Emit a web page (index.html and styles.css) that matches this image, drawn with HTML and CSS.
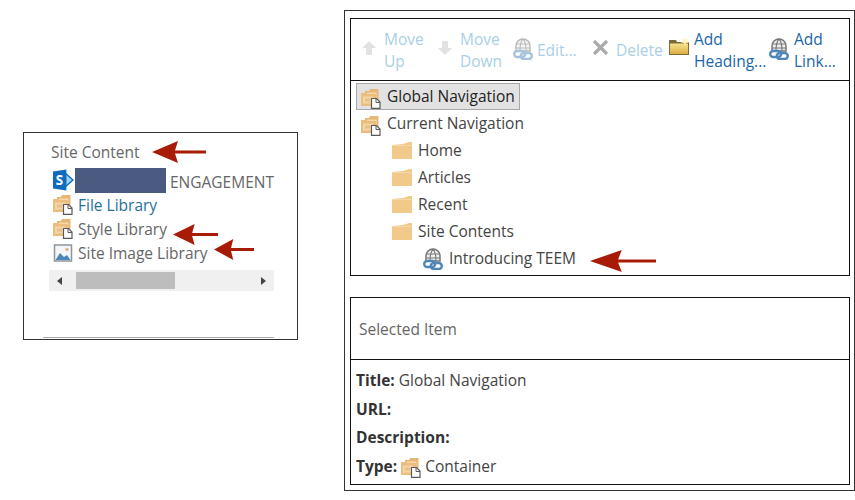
FILE: index.html
```html
<!DOCTYPE html>
<html lang="en">
<head>
<meta charset="utf-8">
<title>Navigation</title>
<link rel="stylesheet" href="styles.css">
</head>
<body>
<svg class="defs" width="0" height="0" aria-hidden="true">
  <defs>
    <linearGradient id="gold" x1="0" y1="0" x2="0" y2="1">
      <stop offset="0" stop-color="#f8e28a"/>
      <stop offset="1" stop-color="#dcae45"/>
    </linearGradient>
    <symbol id="container" viewBox="0 0 20 20">
      <path d="M4 2h4l1-2h8.500v11H4z" fill="#e8b777"/>
      <path d="M6 3.500h9.500v6H6z" fill="#f5d9ab"/>
      <path d="M0 4h5l1 1h9v12H0z" fill="#ebbd7f"/>
      <path d="M2 7.500h10v7H2z" fill="#f4d6a6"/>
      <path d="M4 9.500h5v3H4z" fill="#e8c08a"/>
      <path d="M10.500 9.500h5l3.500 3.500v6.400h-8.500z" fill="#fff" stroke="#5a5a5a" stroke-width="1.200"/>
      <path d="M15 9.500v4h4" fill="none" stroke="#5a5a5a" stroke-width="1"/>
    </symbol>
    <symbol id="folder" viewBox="0 0 20 17">
      <path d="M0 3l11-1 6-2h3v17H0z" fill="#f0c98b"/>
      <path d="M0 3h20v1H0z" fill="#f5d9aa"/>
    </symbol>
    <symbol id="link" viewBox="0 0 20 22">
      <path d="M3 13V8a7 7 0 0 1 14 0v5z" fill="#eeeeee" stroke="#777" stroke-width="1.500"/>
      <path d="M10 1c-3 3-3 9-3 12M10 1c3 3 3 9 3 12M3 6h14M3 10h14" fill="none" stroke="#777" stroke-width="1.100"/>
      <rect x="1.200" y="13" width="11" height="6" rx="3" fill="none" stroke="#4f86ba" stroke-width="2.400"/>
      <rect x="7.800" y="15" width="11" height="6" rx="3" fill="none" stroke="#4f86ba" stroke-width="2.400"/>
    </symbol>
    <symbol id="arrow" viewBox="0 0 54 22" preserveAspectRatio="none">
      <path d="M0 11L26 0l-3 9.500h31v3H23L26 22z" fill="#a81c07"/>
    </symbol>
  </defs>
</svg>

<main class="page">
  <section class="site-panel">
    <div class="site-title">Site Content</div>
    <div class="site-row site-row-first">
      <svg class="ico-sp" viewBox="0 0 22 22">
        <path d="M13 4l8 7-8 7z" fill="#9fd3f2" stroke="#0f6cbd" stroke-width="1.500"/>
        <path d="M0 2l14-2v22L0 20z" fill="#0f6cbd"/>
        <text x="3" y="16.500" class="sp-letter">S</text>
      </svg>
      <span class="redaction"></span>
      <span class="engagement">ENGAGEMENT</span>
    </div>
    <div class="site-row">
      <svg class="ico-con"><use href="#container"/></svg>
      <span class="lib-link">File Library</span>
    </div>
    <div class="site-row">
      <svg class="ico-con"><use href="#container"/></svg>
      <span>Style Library</span>
    </div>
    <div class="site-row">
      <svg class="ico-con" viewBox="0 0 20 20">
        <path d="M1.500 2h17v16h-17z" fill="#f4f7fa" stroke="#8f959c" stroke-width="1.500"/>
        <circle cx="14" cy="6.500" r="1.800" fill="#e7b982"/>
        <path d="M2.500 17l4.500-7 4 4 3-2 3.500 5z" fill="#4d86b8"/>
      </svg>
      <span>Site Image Library</span>
    </div>
    <div class="hscroll">
      <span class="tri-left"></span>
      <span class="thumb"></span>
      <span class="tri-right"></span>
    </div>
    <div class="site-rule"></div>
    <svg class="mark mark-a"><use href="#arrow"/></svg>
    <svg class="mark mark-b"><use href="#arrow"/></svg>
    <svg class="mark mark-c"><use href="#arrow"/></svg>
  </section>

  <section class="nav-panel">
    <div class="box">
      <div class="toolbar">
        <div class="tool off tool-up">
          <svg class="ico-arrow" viewBox="0 0 14 14"><path d="M7 0l7 7H10v7H4V7H0z" fill="#e2e2e2"/></svg>
          <span class="tool-label">Move<br>Up</span>
        </div>
        <div class="tool off tool-down">
          <svg class="ico-arrow" viewBox="0 0 14 14"><path d="M7 14l7-7H10V0H4v7H0z" fill="#e2e2e2"/></svg>
          <span class="tool-label">Move<br>Down</span>
        </div>
        <div class="tool off tool-edit">
          <svg class="ico-link faded"><use href="#link"/></svg>
          <span class="tool-label">Edit...</span>
        </div>
        <div class="tool off tool-delete">
          <svg class="ico-x" viewBox="0 0 17 17"><path d="M2 2l13 13M15 2L2 15" stroke="#ababab" stroke-width="3.200"/></svg>
          <span class="tool-label">Delete</span>
        </div>
        <div class="tool tool-head">
          <svg class="ico-newfolder" viewBox="0 0 20 18">
            <path d="M0 3h7l1 2h12v13H0z" fill="#7d6a3c"/>
            <path d="M1 6.500h18V17H1z" fill="url(#gold)"/>
            <path d="M15.500 0l1 2.500L19 1.500l-1 2.500 2 1.500-3 .5-1 2.500-1-2.500-3-.5 2-1.500-1-2.500 2.500 1z" fill="#fff6b8"/>
          </svg>
          <span class="tool-label">Add<br>Heading...</span>
        </div>
        <div class="tool tool-add">
          <svg class="ico-link"><use href="#link"/></svg>
          <span class="tool-label">Add<br>Link...</span>
        </div>
      </div>
      <div class="tree">
        <div class="node node-selected"><svg class="ico-con"><use href="#container"/></svg><span>Global Navigation</span></div>
        <div class="node"><svg class="ico-con"><use href="#container"/></svg><span>Current Navigation</span></div>
        <div class="node level-1"><svg class="ico-folder"><use href="#folder"/></svg><span>Home</span></div>
        <div class="node level-1"><svg class="ico-folder"><use href="#folder"/></svg><span>Articles</span></div>
        <div class="node level-1"><svg class="ico-folder"><use href="#folder"/></svg><span>Recent</span></div>
        <div class="node level-1"><svg class="ico-folder"><use href="#folder"/></svg><span>Site Contents</span></div>
        <div class="node level-2"><svg class="ico-link"><use href="#link"/></svg><span>Introducing TEEM</span></div>
      </div>
      <svg class="mark mark-d"><use href="#arrow"/></svg>
    </div>

    <div class="box detail-box">
      <div class="detail-head">Selected Item</div>
      <div class="detail-body">
        <div class="detail-row"><b>Title:</b> Global Navigation</div>
        <div class="detail-row"><b>URL:</b></div>
        <div class="detail-row"><b>Description:</b></div>
        <div class="detail-row"><b>Type:</b> <svg class="ico-con"><use href="#container"/></svg> Container</div>
      </div>
    </div>
  </section>
</main>
</body>
</html>
```

FILE: styles.css
```css
* { box-sizing: border-box; }
html, body { margin: 0; padding: 0; background: #fff; }
body {
  width: 855px;
  height: 500px;
  overflow: hidden;
  font-family: "Open Sans", "Noto Sans", sans-serif;
  font-size: 15.500px;
  color: #555;
}
.defs { position: absolute; }
.page { display: flex; align-items: flex-start; padding: 10px 0 0 23px; gap: 46px; }

.site-panel {
  position: relative;
  width: 275px;
  height: 208px;
  margin-top: 122px;
  border: 1px solid #333;
  padding: 8px 23px 0 25px;
  display: flex;
  flex-direction: column;
}
.site-title { height: 26px; line-height: 22px; padding-left: 2px; color: #666; }
.site-row { display: flex; align-items: center; gap: 5px; height: 24px; padding-left: 4px; color: #666; white-space: nowrap; }
.site-row-first { height: 26px; }
.ico-sp { width: 21px; height: 22px; flex: none; margin-right: -4px; }
.sp-letter { font: bold 14px "Open Sans", sans-serif; fill: #fff; }
.redaction { width: 91px; height: 25px; background: #4a5a80; flex: none; }
.engagement { margin: 3px 0 0 -1px; }
.lib-link { color: #1f7199; }
.ico-con { width: 20px; height: 20px; flex: none; }
.hscroll {
  margin-top: 5px;
  height: 21px;
  width: 225px;
  background: #f0f0f0;
  display: flex;
  align-items: center;
  padding: 0 8px;
  flex: none;
}
.tri-left, .tri-right { width: 0; height: 0; border-top: 4.500px solid transparent; border-bottom: 4.500px solid transparent; flex: none; }
.tri-left { border-right: 5px solid #444; }
.tri-right { border-left: 5px solid #444; margin-left: auto; }
.thumb { width: 99px; height: 17px; background: #bdbdbd; margin-left: 14px; flex: none; }
.site-rule { margin: 46px 0 0 -6px; width: 231px; height: 1px; background: #aaa; flex: none; }

.mark { position: absolute; }
.mark-a { left: 128px; top: 8px; width: 54px; height: 22px; }
.mark-b { left: 149px; top: 91px; width: 45px; height: 21px; }
.mark-c { left: 190px; top: 106px; width: 40px; height: 21px; }
.mark-d { left: 239px; top: 231px; width: 66px; height: 22px; }

.nav-panel {
  width: 511px;
  height: 481px;
  border: 1px solid #333;
  padding: 7px 4px 0 5px;
  display: flex;
  flex-direction: column;
  gap: 21px;
}
.box { position: relative; border: 1px solid #111; width: 500px; }
.toolbar { height: 62px; border-bottom: 1px solid #111; display: flex; align-items: center; padding-left: 11px; }
.tool { display: flex; align-items: center; color: #1c66a8; flex: none; }
.tool.off { color: #a9cfe4; }
.tool-label { line-height: 22px; white-space: nowrap; }
.ico-arrow { width: 14px; height: 14px; flex: none; margin: -4px 8px 0 0; }
.ico-link { width: 20px; height: 22px; flex: none; }
.toolbar .ico-link { margin-top: -2px; }
.ico-link.faded { opacity: .5; }
.ico-x { width: 17px; height: 17px; flex: none; margin: -4px 7px 0 0; }
.ico-newfolder { width: 20px; height: 18px; flex: none; margin: -8px 5px 0 0; }
.tool-up { width: 76px; }
.tool-down { width: 75px; }
.tool-edit { width: 79px; gap: 4px; }
.tool-delete { width: 77px; }
.tool-head { width: 100px; }
.tool-add { gap: 5px; }

.tree { padding: 2px 0 3px 5px; display: flex; flex-direction: column; }
.node { display: flex; align-items: center; height: 27px; gap: 6px; padding-left: 5px; white-space: nowrap; color: #444; }
.node span { margin-top: -2px; }
.node .ico-con { margin-top: 4px; }
.node-selected { width: 164px; background: #e2e2e2; border: 1px solid #a8a8a8; padding-left: 4px; color: #222; }
.level-1 { padding-left: 36px; }
.level-2 { padding-left: 67px; }
.ico-folder { width: 20px; height: 17px; flex: none; }

.detail-box { height: 188px; }
.detail-head { height: 62px; border-bottom: 1px solid #111; display: flex; align-items: center; padding-left: 8px; color: #666; }
.detail-body { padding: 6px 0 0 5px; color: #444; }
.detail-row { height: 28.500px; display: flex; align-items: center; gap: 4px; white-space: nowrap; }
.detail-row .ico-con { margin-top: 4px; }
.detail-row b { color: #333; font-weight: 700; }
```
